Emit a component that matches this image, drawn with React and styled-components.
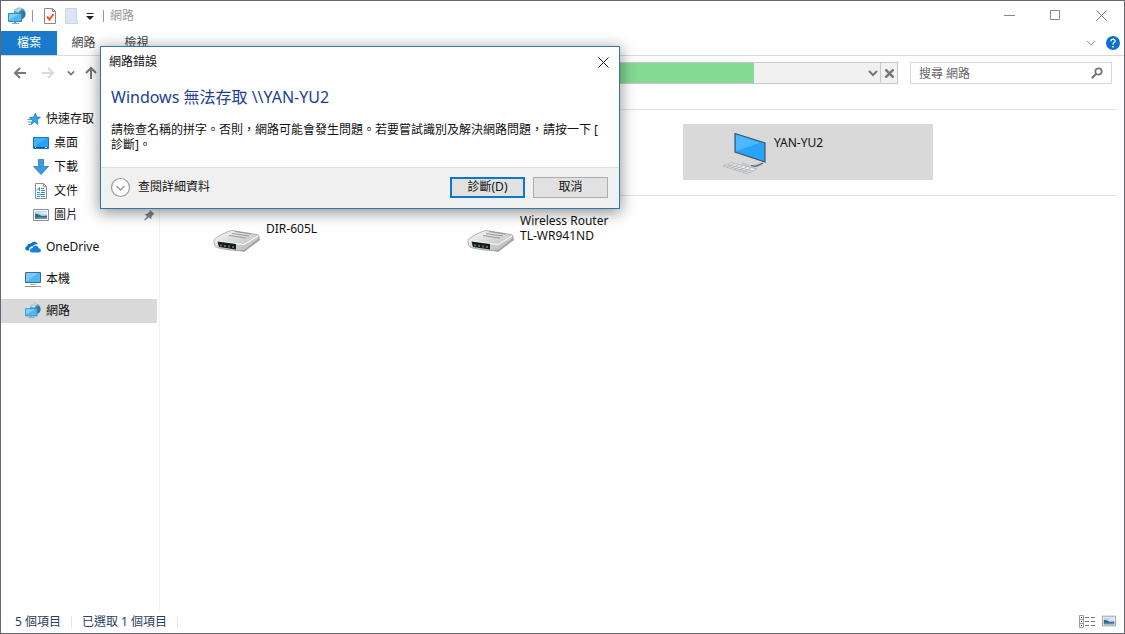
import React from "react";
import styled, { createGlobalStyle, css } from "styled-components";

const GlobalStyle = createGlobalStyle`
  *, *::before, *::after { box-sizing: border-box; }
  body {
    margin: 0;
    background: #fff;
    color: #111;
    font: 12px/16px "Noto Sans", "Noto Sans CJK TC", sans-serif;
  }
  button, input { font: inherit; color: inherit; }
  svg { display: block; flex: none; }
`;

const Window = styled.div`
  position: relative;
  display: flex;
  flex-direction: column;
  min-height: 100vh;
  border: 1px solid #676475;
  background: #fff;
`;

const plainButton = css`
  display: flex;
  align-items: center;
  justify-content: center;
  padding: 0;
  border: 0;
  background: none;
`;

const IconButton = styled.button`
  ${plainButton}
  width: ${(p) => p.$w}px;
  height: ${(p) => p.$h}px;
`;

const TitleBar = styled.header`
  display: flex;
  align-items: flex-start;
  height: 30px;
  padding-left: 7px;
`;

const Separator = styled.span`
  width: 1px;
  height: 12px;
  margin: 0 ${(p) => p.$gap}px;
  background: ${(p) => p.$color};
`;

const QuickAccess = styled.div`
  display: flex;
  align-items: center;
  flex: 1;
  height: 29px;
`;

const WindowTitle = styled.h1`
  margin: 0;
  font-size: 12px;
  font-weight: 400;
  color: #999;
`;

const Ribbon = styled.div`
  display: flex;
  align-items: stretch;
  height: 25px;
  border-bottom: 1px solid #d9d9db;
`;

const Tab = styled.button`
  ${plainButton}
  width: ${(p) => (p.$file ? 56 : 53)}px;
  background: ${(p) => (p.$file ? "#1979ca" : "none")};
  color: ${(p) => (p.$file ? "#fff" : "#444")};
`;

const RibbonTools = styled.div`
  display: flex;
  align-items: center;
  gap: 3px;
  margin-left: auto;
  padding-right: 3px;
`;

const NavBar = styled.div`
  display: flex;
  align-items: center;
  height: 34px;
  padding-right: 12px;
`;

const NavButtons = styled.nav`
  display: flex;
  align-items: center;
  width: 103px;
  padding-left: 7px;
`;

const AddressBar = styled.div`
  display: flex;
  flex: 1;
  height: 22px;
  border: 1px solid #c9c9c9;
  background: #f1f1f1;
`;

const ProgressTrack = styled.div`
  display: flex;
  flex: 1;
`;

const ProgressFill = styled.div`
  background: #84d993;
`;

const StopButton = styled(IconButton)`
  border-left: 1px solid #c9c9c9;
`;

const SearchBox = styled.form`
  display: flex;
  align-items: center;
  width: 202px;
  height: 22px;
  margin-left: 12px;
  padding-left: 8px;
  border: 1px solid #d9d9d9;
`;

const SearchInput = styled.input`
  flex: 1;
  min-width: 0;
  height: 20px;
  padding: 0;
  border: 0;
  outline: 0;
  background: none;
  &::placeholder { color: #666; opacity: 1; }
`;

const Body = styled.div`
  display: flex;
  flex: 1;
`;

const Sidebar = styled.nav`
  width: 159px;
  padding: 17px 2px 0 0;
  border-right: 1px solid #f2f2f2;
`;

const SideGroup = styled.div`
  margin-bottom: 8px;
`;

const SideLink = styled.a`
  display: flex;
  align-items: center;
  gap: 5px;
  height: 24px;
  padding-left: ${(p) => (p.$nested ? 32 : 24)}px;
  background: ${(p) => (p.$selected ? "#d9d9d9" : "none")};
  color: #111;
  text-decoration: none;
`;

const PinSlot = styled.span`
  margin-left: auto;
  padding-right: 2px;
`;

const Content = styled.main`
  flex: 1;
  padding: 19px 7px 0 1px;
`;

const Group = styled.section`
  padding: 14px;
  margin-bottom: 1px;
  border-top: 1px solid #e2e2e2;
`;

const ItemGrid = styled.div`
  display: grid;
  grid-template-columns: repeat(auto-fill, 250px);
  gap: 4px;
`;

const Item = styled.a`
  display: flex;
  grid-column: ${(p) => p.$column};
  height: 56px;
  padding-left: 38px;
  background: ${(p) => (p.$selected ? "#d9d9d9" : "none")};
  color: #111;
  line-height: 15px;
  text-decoration: none;
`;

const ItemName = styled.span`
  display: flex;
  align-items: center;
  width: 96px;
  height: 36px;
  margin-left: 5px;
`;

const StatusBar = styled.footer`
  display: flex;
  align-items: center;
  height: 23px;
  padding: 0 8px 0 14px;
  color: #2b405f;
`;

const ViewButtons = styled.div`
  display: flex;
  gap: 6px;
  margin-left: auto;
`;

const Dialog = styled.div`
  position: absolute;
  top: 45px;
  left: 99px;
  width: 520px;
  border: 1px solid #2f78ae;
  background: #fff;
  box-shadow: 0 3px 14px 1px rgba(0, 0, 0, 0.42);
`;

const DialogHeader = styled.div`
  display: flex;
  align-items: center;
  justify-content: space-between;
  height: 30px;
  padding-left: 8px;
`;

const DialogBody = styled.div`
  height: 90px;
  padding: 8px 10px;
`;

const DialogTitle = styled.h2`
  margin: 0 0 13px;
  font-size: 16px;
  font-weight: 400;
  line-height: 24px;
  color: #1c3f94;
`;

const Message = styled.p`
  margin: 0;
  line-height: 15px;
`;

const DialogFooter = styled.div`
  display: flex;
  align-items: center;
  gap: 8px;
  height: 41px;
  padding: 0 11px 2px 9px;
  border-top: 1px solid #dfdfdf;
  background: #f0f0f0;
`;

const DetailsButton = styled.button`
  ${plainButton}
  gap: 7px;
  margin-right: auto;
`;

const PushButton = styled.button`
  ${plainButton}
  width: 75px;
  height: 21px;
  border: ${(p) => (p.$primary ? "2px solid #0f76c8" : "1px solid #adadad")};
  background: #e1e1e1;
`;

function NetworkIcon({ size = 18 }) {
  return (
    <svg width={size} height={size} viewBox="0 0 18 18">
      <circle cx="11.500" cy="6.500" r="6" fill="#5f9dbf" />
      <path d="M6.500 4C8 .8 12 0 14 1.200 13 3 11.500 3.500 10.500 5.500z" fill="#b4d9e4" />
      <path d="M14.500 3c2 .6 3 2.600 3 4.500-.4 2.500-1.600 3.800-3.500 5z" fill="#357196" />
      <path d="M11 5l3-2 .5 3-1.500 2z" fill="#3c7ca3" />
      <path d="M.5 6.500h13v8H.5z" fill="#4fb8f2" stroke="#3489bd" />
      <path d="M1 13L11 7H1z" fill="#7fd0fa" />
      <path d="M4 16.500h7" stroke="#7fa7bb" />
      <path d="M7 15v1" stroke="#7398ad" strokeWidth="2" />
    </svg>
  );
}

function StarIcon() {
  return (
    <svg width="16" height="16" viewBox="0 0 16 16">
      <path d="M10.500 2l1 4 4 .2-3.300 2.500.8 4.800-3.300-2.700L6 13.500l1.400-4.200L4.500 6.500l4-.3z" fill="#2fa4e9" stroke="#1a79bf" strokeWidth=".8" />
      <path d="M2.500 8.500h3.500M3 11h3M3.500 13.500h2" stroke="#3b9ddd" />
    </svg>
  );
}

function DesktopIcon() {
  return (
    <svg width="16" height="16" viewBox="0 0 16 16">
      <path d="M.5 2.500h15v11H.5z" fill="#28a2f8" stroke="#1876b9" />
      <path d="M1 12L14 3H1z" fill="#42b1ff" />
      <path d="M1 12.500h14" stroke="#125582" />
      <path d="M2 12.500h1M12 12.500h2" stroke="#d9f1ff" />
    </svg>
  );
}

function DownloadIcon() {
  return (
    <svg width="16" height="16" viewBox="0 0 16 16">
      <path d="M5.500.5h5v7h5L8 15.500.5 7.500h5z" fill="#3b98e3" stroke="#2778bd" strokeWidth=".8" />
    </svg>
  );
}

function DocumentIcon() {
  return (
    <svg width="16" height="16" viewBox="0 0 16 16">
      <path d="M2.500.5h8l3 3v12h-11z" fill="#fff" stroke="#8b8f93" />
      <path d="M10.500.5v3h3" fill="none" stroke="#8b8f93" />
      <path d="M4 7.500l2.500-3V8M8 5.500h3M8 7.500h4M4 9.500h3M8 9.500h4M4 11.500h8M4 13.500h3M8 13.500h4" fill="none" stroke="#3a8fc6" />
    </svg>
  );
}

function PictureIcon({ width = 16, height = 16 }) {
  return (
    <svg width={width} height={height} viewBox="0 0 16 16">
      <path d="M.5 2.500h15v11H.5z" fill="#fff" stroke="#8b8f93" />
      <path d="M2 4h12v8H2z" fill="#b7d8f1" />
      <path d="M2 6.500l4 1 3 1.500 5-.5V11H2z" fill="#356a78" />
      <path d="M2 11l5-1h7v2H2z" fill="#5c8fc0" />
      <path d="M6 6l4-1h4v2.500z" fill="#e4f1f6" />
    </svg>
  );
}

function CloudIcon() {
  return (
    <svg width="16" height="16" viewBox="0 0 16 16">
      <path d="M4 11.500H2.500C-.5 11-.3 7.800 2.300 7.300 2.400 4.800 4.600 4 6 4.600 8 1.800 12 2.500 12.800 5.500 9.800 4.700 8.500 6.300 8 7.300 5.300 7 4 9 4 11.500z" fill="#0f6fc6" />
      <path d="M7 13.500c-2.800 0-2.800-4.300.6-4.500.8-3.500 5.300-3.500 6 .2 3 .2 3.200 4.100.3 4.300z" fill="#1481dc" />
    </svg>
  );
}

function ComputerIcon() {
  return (
    <svg width="16" height="16" viewBox="0 0 16 16">
      <path d="M.5 1.500h15v10H.5z" fill="#4db8f6" stroke="#3b6c8c" />
      <path d="M1 11L13 2H1z" fill="#7accfb" />
      <path d="M5 13.500h6" stroke="#a9b5bc" />
      <path d="M0 15.500h16" stroke="#8794a0" />
    </svg>
  );
}

function PinIcon() {
  return (
    <svg width="11" height="12" viewBox="0 0 11 12">
      <path d="M6 1l4.500 4-1.500.7L7.500 8l-.3 2.300-2.500-2L1 11.500 0 11l3-3.800-2.500-2 2.500-.5L5.500 3z" fill="#7d868f" />
    </svg>
  );
}

function RemoteComputerIcon() {
  return (
    <svg width="48" height="52" viewBox="1 0 48 52">
      <path d="M22 39l9 4 11-3" fill="none" stroke="#c3c8cb" strokeWidth="3" />
      <path d="M31 41.500l5 .8 7-3.300" fill="none" stroke="#53616a" strokeWidth="1.200" />
      <path d="M3 42l8-3.500 26 6.500-10 4.500z" fill="#eef1f2" stroke="#a3abb0" strokeWidth=".7" />
      <path d="M8 40.500l24 6.500M5.500 41.500l24 7M7 43l7-3.500M11 44.300l8-3.800M15 45.500l8-4M19 46.800l8-4M23 48l8-3.800" stroke="#a3abb0" strokeWidth=".8" />
      <path d="M15 9.500l30 9.500v19l-30-10z" fill="#27a3fa" stroke="#40586a" strokeWidth="1.200" />
      <path d="M16 10.700l24 8L16 27z" fill="#4cb8ff" />
    </svg>
  );
}

function RouterIcon() {
  return (
    <svg width="48" height="48" viewBox="0 0 48 48">
      <defs>
        <linearGradient id="case" x1="0" y1="0" x2="1" y2="1">
          <stop offset="0" stopColor="#fafafa" />
          <stop offset="1" stopColor="#b4b4b4" />
        </linearGradient>
      </defs>
      <path d="M8 37l23 5 16-12-1-4-14 11z" fill="#555" opacity=".55" />
      <path d="M1 30c0-2 15-9.500 18-9.500l25 4c2.500.5 2.500 4 0 5.500L32 40c-4 2-26-1-29-3-2-1-2-5-2-7z" fill="url(#case)" stroke="#999" strokeWidth=".7" />
      <path d="M2 31l29 3.500 14-8.500" fill="none" stroke="#fff" />
      <path d="M4.500 31.500L23 34v5.500L6 37z" fill="#141d20" />
      <path d="M8 34.500v2M12 35v2M16 35.500v2M20 36v2" stroke="#8fbfa6" />
      <path d="M22 21.500l16 2.500M19 23.500l17 2.500M16 25.500l17 2.500" stroke="#868686" strokeWidth=".8" />
    </svg>
  );
}

function Chevron({ color = "#777", size = 10, weight = 2 }) {
  return (
    <svg width={size} height={size} viewBox="0 0 10 10">
      <path d="M1 3l4 4 4-4" fill="none" stroke={color} strokeWidth={weight} />
    </svg>
  );
}

function Arrow({ rotate = 0, color = "#777" }) {
  return (
    <svg width="14" height="14" viewBox="0 0 14 14">
      <path d="M13 7H2M7 2L2 7l5 5" fill="none" stroke={color} strokeWidth="2" transform={`rotate(${rotate} 7 7)`} />
    </svg>
  );
}

function Cross({ size = 11, color = "#777", weight = 1 }) {
  return (
    <svg width={size} height={size} viewBox="0 0 11 11">
      <path d="M.5.5l10 10M10.500.5l-10 10" stroke={color} strokeWidth={weight} />
    </svg>
  );
}

const places = [
  { label: "桌面", icon: <DesktopIcon /> },
  { label: "下載", icon: <DownloadIcon /> },
  { label: "文件", icon: <DocumentIcon /> },
  { label: "圖片", icon: <PictureIcon />, pinned: true },
];

export default function App() {
  return (
    <>
      <GlobalStyle />
      <Window>
        <TitleBar>
          <QuickAccess>
            <NetworkIcon />
            <Separator $gap={6} $color="#999" />
            <IconButton $w={22} $h={22} aria-label="內容">
              <svg width="14" height="16" viewBox="0 0 14 16">
                <path d="M1.500.5h8l3 3v12h-11z" fill="#fff" stroke="#888" />
                <path d="M9.500.5v3h3" fill="none" stroke="#888" />
                <path d="M4 8.500l2.500 3 4-5.500" fill="none" stroke="#e35b26" strokeWidth="2" />
              </svg>
            </IconButton>
            <IconButton $w={22} $h={22} aria-label="新增資料夾">
              <svg width="14" height="16" viewBox="0 0 14 16">
                <path d="M.5.5h11v11l1.500 2v2H.5z" fill="#dbe5f6" stroke="#c8d5ea" />
              </svg>
            </IconButton>
            <IconButton $w={14} $h={22} aria-label="自訂快速存取工具列">
              <svg width="8" height="8" viewBox="0 0 8 8">
                <path d="M.5 1.500h7" stroke="#222" />
                <path d="M0 4h8L4 8z" fill="#222" />
              </svg>
            </IconButton>
            <Separator $gap={6} $color="#999" />
            <WindowTitle>網路</WindowTitle>
          </QuickAccess>
          <IconButton $w={46} $h={29} aria-label="最小化">
            <svg width="11" height="11" viewBox="0 0 11 11"><path d="M0 5.500h11" stroke="#888" /></svg>
          </IconButton>
          <IconButton $w={46} $h={28} aria-label="最大化">
            <svg width="10" height="10" viewBox="0 0 10 10"><path d="M.5.5h9v9h-9z" fill="none" stroke="#888" /></svg>
          </IconButton>
          <IconButton $w={46} $h={28} aria-label="關閉視窗">
            <Cross />
          </IconButton>
        </TitleBar>

        <Ribbon>
          <Tab $file>檔案</Tab>
          <Tab>網路</Tab>
          <Tab>檢視</Tab>
          <RibbonTools>
            <IconButton $w={22} $h={22} aria-label="展開功能區">
              <Chevron color="#999" weight={1} />
            </IconButton>
            <IconButton $w={16} $h={22} aria-label="說明">
              <svg width="14" height="14" viewBox="0 0 14 14">
                <circle cx="7" cy="7" r="7" fill="#0a72cc" />
                <path d="M5 5.200c0-2.800 4.300-2.600 4.100-.1C9 6.500 7 6.600 7 8.500" fill="none" stroke="#fff" strokeWidth="1.400" />
                <circle cx="7" cy="10.700" r=".9" fill="#fff" />
              </svg>
            </IconButton>
          </RibbonTools>
        </Ribbon>

        <NavBar>
          <NavButtons>
            <IconButton $w={24} $h={24} aria-label="上一頁"><Arrow /></IconButton>
            <IconButton $w={36} $h={24} aria-label="下一頁"><Arrow rotate={180} color="#d9d9d9" /></IconButton>
            <IconButton $w={12} $h={24} aria-label="最近的位置"><Chevron size={8} /></IconButton>
            <IconButton $w={28} $h={24} aria-label="向上"><Arrow rotate={90} /></IconButton>
          </NavButtons>
          <AddressBar>
            <ProgressTrack>
              <ProgressFill style={{ width: "85.3%" }} />
            </ProgressTrack>
            <IconButton $w={14} $h={20} aria-label="舊的位置"><Chevron weight={2} /></IconButton>
            <StopButton $w={17} $h={20} aria-label="停止"><Cross size={9} weight={3} /></StopButton>
          </AddressBar>
          <SearchBox role="search">
            <SearchInput aria-label="搜尋 網路" placeholder="搜尋 網路" />
            <IconButton type="button" $w={28} $h={20} aria-label="搜尋">
              <svg width="12" height="12" viewBox="0 0 12 12">
                <circle cx="7.500" cy="4.500" r="3.200" fill="none" stroke="#777" strokeWidth="1.800" />
                <path d="M5.300 6.700L.8 11.200" stroke="#777" strokeWidth="2" />
              </svg>
            </IconButton>
          </SearchBox>
        </NavBar>

        <Body>
          <Sidebar>
            <SideGroup>
              <SideLink href="#quick"><StarIcon />快速存取</SideLink>
              {places.map((place) => (
                <SideLink key={place.label} href="#place" $nested>
                  {place.icon}
                  {place.label}
                  {place.pinned && <PinSlot><PinIcon /></PinSlot>}
                </SideLink>
              ))}
            </SideGroup>
            <SideGroup><SideLink href="#onedrive"><CloudIcon />OneDrive</SideLink></SideGroup>
            <SideGroup><SideLink href="#pc"><ComputerIcon />本機</SideLink></SideGroup>
            <SideGroup><SideLink href="#network" $selected><NetworkIcon size={16} />網路</SideLink></SideGroup>
          </Sidebar>

          <Content>
            <Group>
              <ItemGrid>
                <Item href="#yan-yu2" $column={3} $selected>
                  <RemoteComputerIcon />
                  <ItemName>YAN-YU2</ItemName>
                </Item>
              </ItemGrid>
            </Group>
            <Group>
              <ItemGrid>
                <Item href="#dir-605l" $column={1}>
                  <RouterIcon />
                  <ItemName>DIR-605L</ItemName>
                </Item>
                <Item href="#tl-wr941nd" $column={2}>
                  <RouterIcon />
                  <ItemName>Wireless Router TL-WR941ND</ItemName>
                </Item>
              </ItemGrid>
            </Group>
          </Content>
        </Body>

        <StatusBar>
          <span>5 個項目</span>
          <Separator $gap={10} $color="#e6e6e6" />
          <span>已選取 1 個項目</span>
          <Separator $gap={10} $color="#e6e6e6" />
          <ViewButtons>
            <IconButton $w={17} $h={16} aria-label="詳細資料">
              <svg width="17" height="13" viewBox="0 0 17 13">
                <path d="M.5.5h4v12h-4zM.5 4.500h4M.5 8.500h4" fill="#fff" stroke="#999" />
                <path d="M2 2.500h1M2 6.500h1M2 10.500h1" stroke="#333" />
                <path d="M6 2.500h4M12 2.500h4M6 6.500h4M12 6.500h4M6 10.500h4M12 10.500h4" stroke="#777" />
              </svg>
            </IconButton>
            <IconButton $w={14} $h={14} aria-label="大圖示">
              <PictureIcon width={14} height={14} />
            </IconButton>
          </ViewButtons>
        </StatusBar>

        <Dialog role="dialog" aria-labelledby="error-title">
          <DialogHeader>
            網路錯誤
            <IconButton $w={31} $h={28} aria-label="關閉"><Cross color="#111" /></IconButton>
          </DialogHeader>
          <DialogBody>
            <DialogTitle id="error-title">Windows 無法存取 \\YAN-YU2</DialogTitle>
            <Message>
              請檢查名稱的拼字。否則，網路可能會發生問題。若要嘗試識別及解決網路問題，請按一下 [<br />診斷]。
            </Message>
          </DialogBody>
          <DialogFooter>
            <DetailsButton>
              <svg width="21" height="21" viewBox="0 0 21 21">
                <circle cx="10.500" cy="10.500" r="9" fill="#fff" stroke="#999" strokeWidth="1.200" />
                <path d="M6.500 9l4 4 4-4" fill="none" stroke="#999" strokeWidth="1.500" />
              </svg>
              查閱詳細資料
            </DetailsButton>
            <PushButton $primary>診斷(D)</PushButton>
            <PushButton>取消</PushButton>
          </DialogFooter>
        </Dialog>
      </Window>
    </>
  );
}
